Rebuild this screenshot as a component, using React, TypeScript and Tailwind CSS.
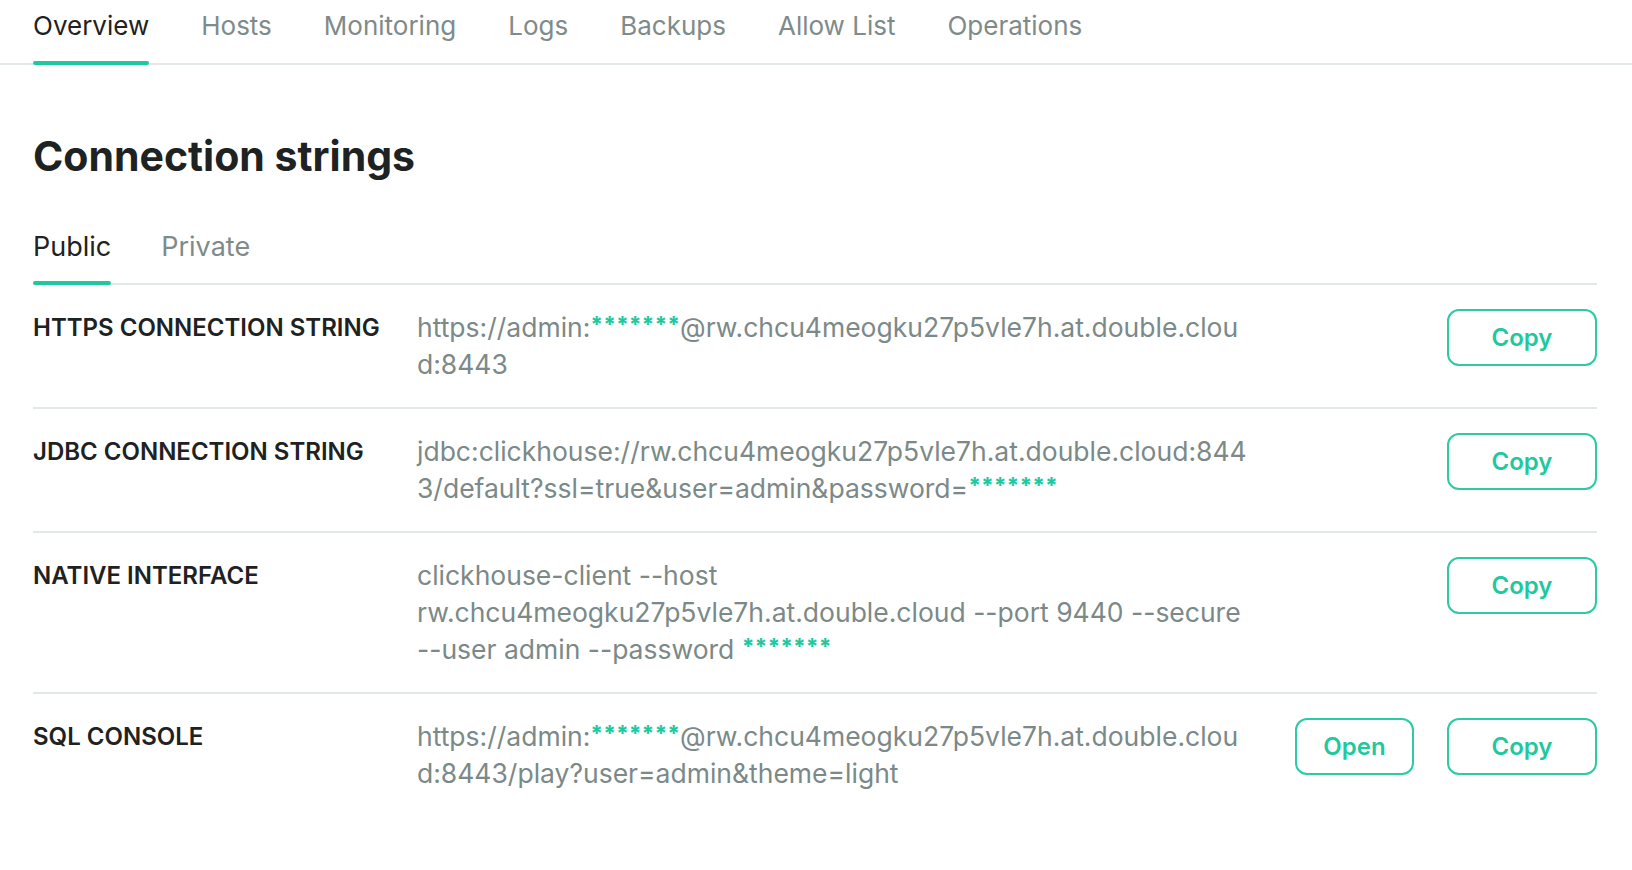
import React from "react";

const green = "text-[#1fc99f]";

interface Row {
  label: string;
  lines: React.ReactNode[];
  open?: boolean;
}

function Stars() {
  return (
    <span className={`${green} font-extrabold text-[22px] leading-none align-[5px]`}>*******</span>
  );
}

const rows: Row[] = [
  {
    label: "HTTPS CONNECTION STRING",
    lines: [
      <>
        https://admin:<Stars />@rw.chcu4meogku27p5vle7h.at.double.clou
      </>,
      "d:8443",
    ],
  },
  {
    label: "JDBC CONNECTION STRING",
    lines: [
      "jdbc:clickhouse://rw.chcu4meogku27p5vle7h.at.double.cloud:844",
      <>
        3/default?ssl=true&amp;user=admin&amp;password=<Stars />
      </>,
    ],
  },
  {
    label: "NATIVE INTERFACE",
    lines: [
      "clickhouse-client --host",
      "rw.chcu4meogku27p5vle7h.at.double.cloud --port 9440 --secure",
      <>
        --user admin --password <Stars />
      </>,
    ],
  },
  {
    label: "SQL CONSOLE",
    lines: [
      <>
        https://admin:<Stars />@rw.chcu4meogku27p5vle7h.at.double.clou
      </>,
      "d:8443/play?user=admin&theme=light",
    ],
    open: true,
  },
];

const tabs = ["Overview", "Hosts", "Monitoring", "Logs", "Backups", "Allow List", "Operations"];

function OutlineButton({ children, width }: { children: React.ReactNode; width: string }) {
  return (
    <button
      className={`${width} h-[57px] rounded-[12px] border-2 border-[#2ccba4] bg-white text-[24px] font-semibold ${green}`}
    >
      {children}
    </button>
  );
}

export default function App() {
  return (
    <div
      className="w-[1632px] h-[870px] overflow-hidden bg-white"
      style={{ fontFamily: "Inter, 'Noto Sans', sans-serif" }}
    >
      {/* Top tabs */}
      <nav className="flex gap-[52px] pl-[33px] border-b-2 border-[#e2e8e7]">
        {tabs.map((t, i) => (
          <div key={t} className="flex flex-col -mb-[2px]">
            <span
              className={`pt-[11px] pb-[20px] text-[26px] leading-[30px] ${
                i === 0 ? "text-[#1e2222]" : "text-[#7e8b8a]"
              }`}
            >
              {t}
            </span>
            <div className={`h-[4px] rounded-full ${i === 0 ? "bg-[#1fc99f]" : "bg-transparent"}`} />
          </div>
        ))}
      </nav>

      <div className="pl-[33px] pr-[35px]">
        <h1 className="mt-[69px] text-[41px] leading-[44px] font-bold text-[#1e2222]">
          Connection strings
        </h1>

        {/* Sub tabs */}
        <div className="mt-[54px] flex gap-[50px] border-b-2 border-[#e2e8e7]">
          {["Public", "Private"].map((t, i) => (
            <div key={t} className="flex flex-col -mb-[2px]">
              <span
                className={`pb-[19px] text-[27px] leading-[30px] ${
                  i === 0 ? "text-[#1e2222]" : "text-[#7e8b8a]"
                }`}
              >
                {t}
              </span>
              <div className={`h-[4px] rounded-full ${i === 0 ? "bg-[#1fc99f]" : "bg-transparent"}`} />
            </div>
          ))}
        </div>

        {/* Rows */}
        {rows.map((r, idx) => (
          <div
            key={r.label}
            className={`flex py-[24px] ${idx < rows.length - 1 ? "border-b-2 border-[#e2e8e7]" : ""}`}
          >
            <div className="w-[384px] shrink-0 text-[24px] leading-[37px] font-semibold text-[#1e2222]">
              {r.label}
            </div>
            <div className="flex-1 text-[26.5px] leading-[37px] text-[#7b8988]">
              {r.lines.map((l, j) => (
                <div key={j} className="h-[37px] whitespace-nowrap">
                  {l}
                </div>
              ))}
            </div>
            <div className="flex gap-[33px] items-start">
              {r.open && <OutlineButton width="w-[119px]">Open</OutlineButton>}
              <OutlineButton width="w-[150px]">Copy</OutlineButton>
            </div>
          </div>
        ))}
      </div>
    </div>
  );
}
